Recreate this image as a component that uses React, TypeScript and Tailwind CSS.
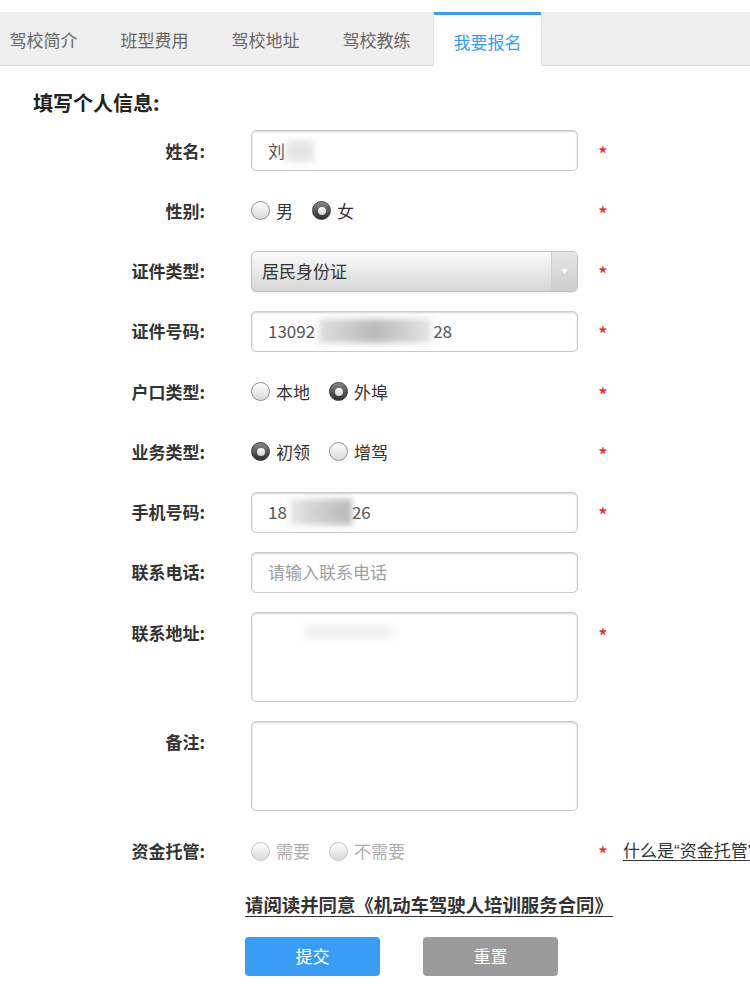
import React from "react";

function Radio({ checked, disabled }: { checked?: boolean; disabled?: boolean }) {
  if (checked) {
    return (
      <span className="w-[19px] h-[19px] rounded-full border border-[#3a3a3a] bg-linear-to-b from-[#8a8a8a] to-[#2e2e2e] flex items-center justify-center shrink-0">
        <span className="w-[8px] h-[8px] rounded-full bg-linear-to-b from-white to-[#cfcfcf]" />
      </span>
    );
  }
  return (
    <span
      className={
        "w-[19px] h-[19px] rounded-full border bg-linear-to-b from-white to-[#d9d9d9] shrink-0 " +
        (disabled ? "border-[#c4c4c4]" : "border-[#8f8f8f]")
      }
    />
  );
}

function RadioGroup({
  options,
  checkedIndex,
  disabled,
}: {
  options: string[];
  checkedIndex: number;
  disabled?: boolean;
}) {
  return (
    <div className="flex items-center h-full gap-[19px]">
      {options.map((o, i) => (
        <label key={o} className="flex items-center gap-[6px] shrink-0">
          <Radio checked={i === checkedIndex} disabled={disabled} />
          <span className={"text-[17px] leading-[24px] whitespace-nowrap " + (disabled ? "text-[#adadad]" : "text-[#333]")}>{o}</span>
        </label>
      ))}
    </div>
  );
}

function Star() {
  return <span className="text-[#e4262b] text-[21px] leading-[24px] translate-y-[4px] inline-block">*</span>;
}

function Row({
  label,
  children,
  star,
  h = 41,
  extra,
}: {
  label: string;
  children: React.ReactNode;
  star?: boolean;
  h?: number;
  extra?: React.ReactNode;
}) {
  return (
    <div className="flex w-[750px]" style={{ height: h }}>
      <div className="w-[205px] shrink-0 flex justify-end h-[41px] items-center">
        <span className="text-[17px] font-bold text-[#333] leading-[24px] whitespace-nowrap">{label}:</span>
      </div>
      <div className="ml-[46px] w-[327px] shrink-0 h-full">{children}</div>
      <div className="ml-[20px] shrink-0 h-[41px] flex items-center whitespace-nowrap">
        <span className="w-[25px] shrink-0">{star ? <Star /> : null}</span>
        {extra}
      </div>
    </div>
  );
}

const inputBox =
  "w-full h-full rounded-[5px] border border-[#c9c9c9] bg-white shadow-[inset_0_1px_2px_rgba(0,0,0,0.18)]";

function TextInput({ children }: { children: React.ReactNode }) {
  return (
    <div className={inputBox + " flex items-center pl-[16px] text-[17px] text-[#555] leading-[24px] whitespace-nowrap overflow-hidden"}>
      {children}
    </div>
  );
}

export default function App() {
  const tabs = ["驾校简介", "班型费用", "驾校地址", "驾校教练", "我要报名"];
  return (
    <div className="w-[750px] h-[984px] overflow-hidden bg-white font-['Noto_Sans_CJK_SC',sans-serif]">
      <div className="h-[12px]" />
      <div className="h-[54px] bg-[#efefef] border-b border-[#d8d8d8] overflow-visible">
        <div className="flex gap-[4px] -ml-[10px] h-full">
          {tabs.map((t, i) => {
            const active = i === tabs.length - 1;
            return (
              <div
                key={t}
                className={
                  "w-[107px] flex items-center justify-center text-[17px] leading-[24px] " +
                  (active
                    ? "bg-white text-[#3a9cf4] border-t-[3px] border-[#3a9cf4] h-[54px] relative z-10 pt-[2px] shadow-[1px_0_0_#e4e4e4,-1px_0_0_#e4e4e4]"
                    : "text-[#666] pt-[2px]")
                }
              >
                {t}
              </div>
            );
          })}
        </div>
      </div>

      <h2 className="mt-[25px] ml-[33px] text-[20px] font-bold text-[#222] leading-[24px]">填写个人信息:</h2>

      <div className="mt-[15px] flex flex-col gap-[19.25px]">
        <Row label="姓名" star>
          <TextInput>
            <span>刘</span>
            <span className="inline-block ml-[1px] w-[28px] h-[22px] bg-[#d6d6d6] blur-[3px] opacity-60" />
          </TextInput>
        </Row>
        <Row label="性别" star>
          <RadioGroup options={["男", "女"]} checkedIndex={1} />
        </Row>
        <Row label="证件类型" star>
          <div className="w-full h-full rounded-[5px] border border-[#c2c2c2] bg-linear-to-b from-[#fbfbfb] to-[#d6d6d6] flex items-center shadow-[0_1px_1px_rgba(0,0,0,0.08)]">
            <span className="flex-1 pl-[10px] text-[17px] text-[#333] leading-[24px]">居民身份证</span>
            <span className="w-[26px] h-full border-l border-[#cfcfcf] bg-linear-to-b from-[#e6e6e6] to-[#cdcdcd] rounded-r-[5px] flex items-center justify-center">
              <svg width="9" height="7" viewBox="0 0 9 7">
                <path d="M0.5 0.5 L8.5 0.5 L4.5 6.5 Z" fill="#ffffff" stroke="#d0d0d0" strokeWidth="0.6" />
              </svg>
            </span>
          </div>
        </Row>
        <Row label="证件号码" star>
          <TextInput>
            <span>13092</span>
            <span className="inline-block ml-[4px] w-[112px] h-[24px] bg-linear-to-r from-[#d6d6d6] via-[#a9a9a9] to-[#dedede] blur-[3px] opacity-80" />
            <span className="ml-[2px]">28</span>
          </TextInput>
        </Row>
        <Row label="户口类型" star>
          <RadioGroup options={["本地", "外埠"]} checkedIndex={1} />
        </Row>
        <Row label="业务类型" star>
          <RadioGroup options={["初领", "增驾"]} checkedIndex={0} />
        </Row>
        <Row label="手机号码" star>
          <TextInput>
            <span>18</span>
            <span className="inline-block ml-[3px] w-[62px] h-[26px] bg-linear-to-r from-[#e2e2e2] via-[#c2c2c2] to-[#a8a8a8] blur-[3px] opacity-80" />
            <span>26</span>
          </TextInput>
        </Row>
        <Row label="联系电话">
          <TextInput>
            <span className="text-[#a0a0a0]">请输入联系电话</span>
          </TextInput>
        </Row>
        <Row label="联系地址" star h={90}>
          <div className={inputBox + " relative"}>
            <span className="absolute left-[52px] top-[12px] w-[90px] h-[14px] bg-[#f3f3f3] blur-[3px]" />
          </div>
        </Row>
        <Row label="备注" h={90}>
          <div className={inputBox} />
        </Row>
        <Row
          label="资金托管"
          star
          extra={
            <span className="text-[17px] leading-[24px] text-[#333] underline underline-offset-[3px]">
              什么是<span className="font-['Liberation_Sans',sans-serif]">“</span>资金托管<span className="font-['Liberation_Sans',sans-serif]">”</span>
            </span>
          }
        >
          <RadioGroup options={["需要", "不需要"]} checkedIndex={-1} disabled />
        </Row>
      </div>

      <div className="mt-[20px] ml-[245px]">
        <span className="text-[18.4px] font-bold leading-[24px] text-[#333] underline underline-offset-[4px] whitespace-nowrap">
          请阅读并同意《机动车驾驶人培训服务合同》
        </span>
      </div>

      <div className="mt-[20px] ml-[245px] flex gap-[43px]">
        <button className="w-[135px] h-[39px] rounded-[4px] bg-[#3a9df5] text-white text-[17px] leading-[24px]">提交</button>
        <button className="w-[135px] h-[39px] rounded-[4px] bg-[#9b9b9b] text-white text-[17px] leading-[24px]">重置</button>
      </div>
    </div>
  );
}
